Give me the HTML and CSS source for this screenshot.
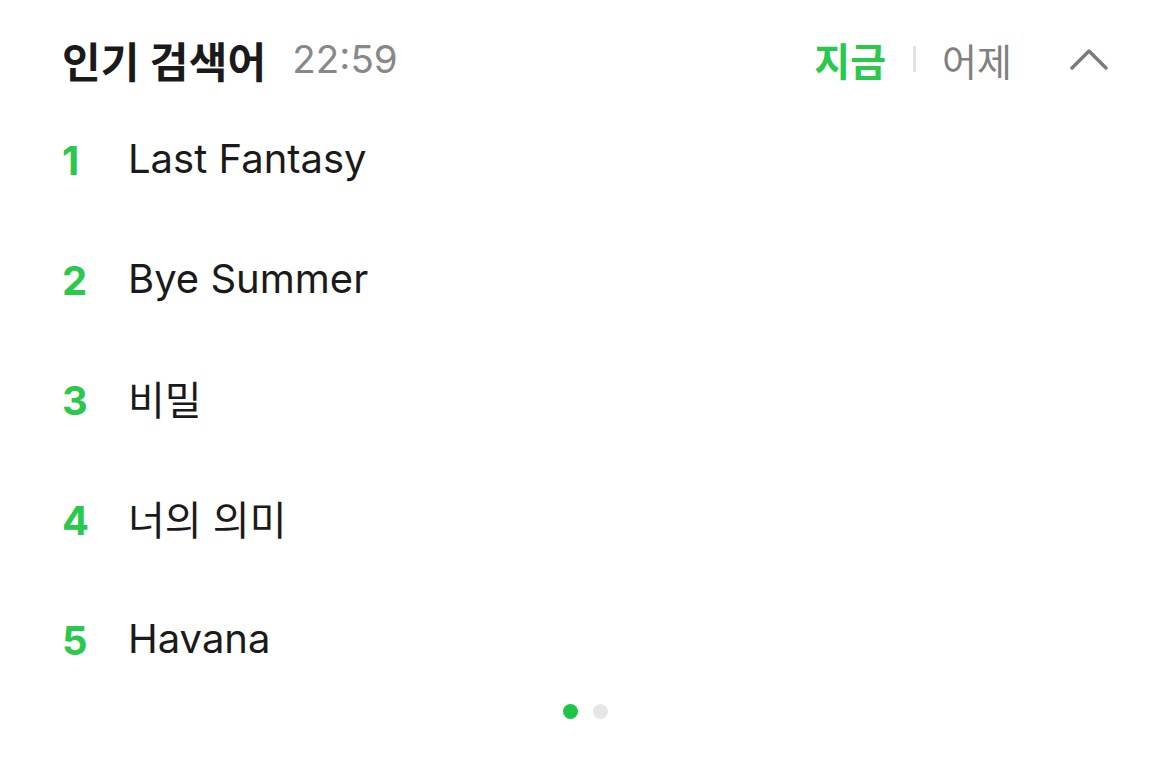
FILE: index.html
```html
<!DOCTYPE html>
<html>
<head>
    <title>인기 검색어</title>
    <link rel="stylesheet" href="styles.css">
</head>
<body>
    <div class="rank-box">
        <div class="rank-header">
            <h2 class="rank-title">인기 검색어</h2>
            <span class="rank-time">22:59</span>
            <div class="rank-tabs">
                <span class="tab tab-on">지금</span>
                <span class="tab-sep"></span>
                <span class="tab">어제</span>
            </div>
            <svg class="fold-icon" width="38" height="24" viewBox="0 0 38 24">
                <path d="M2 21 L19 4 L36 21" fill="none" stroke="#7a7a7a" stroke-width="3.4" stroke-linecap="round" stroke-linejoin="round"/>
            </svg>
        </div>

        <ol class="rank-list">
            <li class="rank-item"><span class="rank-num">1</span><span class="rank-word">Last Fantasy</span></li>
            <li class="rank-item"><span class="rank-num">2</span><span class="rank-word">Bye Summer</span></li>
            <li class="rank-item"><span class="rank-num">3</span><span class="rank-word">비밀</span></li>
            <li class="rank-item"><span class="rank-num">4</span><span class="rank-word">너의 의미</span></li>
            <li class="rank-item"><span class="rank-num">5</span><span class="rank-word">Havana</span></li>
        </ol>

        <div class="pager">
            <span class="dot dot-on"></span>
            <span class="dot"></span>
        </div>
    </div>
</body>
</html>
```

FILE: styles.css
```css
body {
    margin: 0;
    background: #fff;
    font-family: Inter, "Noto Sans CJK KR", sans-serif;
    color: #1a1a1a;
}
.rank-box {
    width: 1170px;
    height: 774px;
    padding: 0 62px;
    box-sizing: border-box;
}
.rank-header {
    display: flex;
    align-items: center;
    height: 80px;
    padding-top: 19px;
    padding-bottom: 1px;
}
.rank-title {
    margin: 0;
    font-size: 42px;
    font-weight: 700;
    letter-spacing: 0.2px;
}
.rank-time {
    margin-left: 26px;
    font-size: 38.5px;
    color: #888;
}
.rank-tabs {
    display: flex;
    align-items: center;
    margin-left: auto;
}
.tab {
    font-size: 38px;
    color: #808080;
}
.tab-on {
    color: #2ac84c;
    font-weight: 700;
    font-size: 39px;
}
.tab-sep {
    width: 3px;
    height: 26px;
    background: #e2e2e2;
    margin: 0 26px 0 27px;
}
.fold-icon {
    margin-left: 58px;
}
.rank-list {
    list-style: none;
    margin: 0;
    padding: 0;
}
.rank-item {
    display: flex;
    align-items: center;
    height: 120px;
}
.rank-num {
    width: 66px;
    font-size: 40px;
    font-weight: 700;
    color: #2ac84c;
}
.rank-word {
    font-size: 40px;
    position: relative;
    top: -2px;
}
.pager {
    display: flex;
    justify-content: center;
    gap: 15px;
    margin-top: 4px;
}
.dot {
    width: 15px;
    height: 15px;
    border-radius: 50%;
    background: #e6e6e6;
}
.dot-on {
    background: #1dc545;
}
```
